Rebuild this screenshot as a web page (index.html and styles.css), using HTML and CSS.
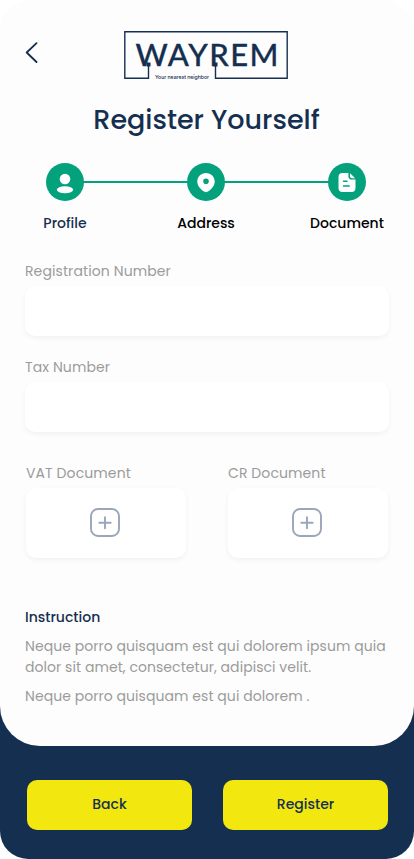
FILE: index.html
```html
<!DOCTYPE html>
<html lang="en">
<head>
<meta charset="utf-8">
<meta name="viewport" content="width=device-width, initial-scale=1">
<title>Register Yourself</title>
<link rel="stylesheet" href="styles.css">
</head>
<body>
<div class="screen">
  <main class="sheet">
    <header class="top">
      <a class="back-link" href="#" aria-label="Go back">
        <svg width="13" height="21" viewBox="0 0 13 21"><path d="M11.500 1.200 1.700 10.500 11.500 20"/></svg>
      </a>
      <svg class="logo" width="164" height="49" viewBox="0 0 164 49">
        <path class="logo-frame" d="M24.5 34V47.300H.8V.8H163.200V47.300H91.500V34"/>
        <rect x="22.500" y="31.500" width="4" height="4"/><rect x="89.500" y="31.500" width="4" height="4"/>
        <text class="logo-name" x="11.500" y="35" textLength="143" lengthAdjust="spacing">WAYREM</text>
        <text class="logo-tag" x="31" y="47.500" textLength="54">Your nearest neighbor</text>
      </svg>
    </header>

    <h1 class="title">Register Yourself</h1>

    <ol class="steps">
      <li class="step current">
        <span class="dot"><svg width="38" height="38" viewBox="0 0 38 38"><circle cx="19" cy="16" r="5.300"/><ellipse cx="19" cy="26.700" rx="8.200" ry="3.500"/></svg></span>
        <span class="step-name">Profile</span>
      </li>
      <li class="step">
        <span class="dot"><svg width="38" height="38" viewBox="0 0 38 38"><path fill-rule="evenodd" d="M19 10c-5 0-8.700 3.700-8.700 8.400 0 4.800 3.500 8 7.300 10.400q1.400.8 2.800 0c3.800-2.400 7.300-5.600 7.300-10.400C27.700 13.700 24 10 19 10Zm0 5.400a2.800 2.800 0 1 1 0 5.600 2.800 2.800 0 0 1 0-5.600Z"/></svg></span>
        <span class="step-name">Address</span>
      </li>
      <li class="step">
        <span class="dot"><svg width="38" height="38" viewBox="0 0 38 38"><path d="M14.500 10H20.400V13.200Q20.400 16.600 24 16.600H27.500V25Q27.500 29 23.500 29H14.500Q10.500 29 10.500 25V14Q10.500 10 14.500 10ZM22 10.200 27.200 15.300H24Q22 15.300 22 13.300Z"/><path class="cut" d="M15.500 18.200h3.500M15.500 23h5.700"/></svg></span>
        <span class="step-name">Document</span>
      </li>
    </ol>

    <form class="form">
      <label class="field"><span class="label">Registration Number</span><input class="box" type="text"></label>
      <label class="field"><span class="label">Tax Number</span><input class="box" type="text"></label>
      <div class="uploads">
        <div class="upload"><span class="label">VAT Document</span>
          <button class="box drop" type="button" aria-label="Add VAT document"><svg width="32" height="32" viewBox="0 0 32 32"><rect x="2" y="2" width="28" height="27" rx="7"/><path d="M16 10.200v11M10.300 15.700h11.400"/></svg></button></div>
        <div class="upload"><span class="label">CR Document</span>
          <button class="box drop" type="button" aria-label="Add CR document"><svg width="32" height="32" viewBox="0 0 32 32"><rect x="2" y="2" width="28" height="27" rx="7"/><path d="M16 10.200v11M10.300 15.700h11.400"/></svg></button></div>
      </div>
    </form>

    <section class="notes">
      <h2>Instruction</h2>
      <p>Neque porro quisquam est qui dolorem ipsum quia<br>dolor sit amet, consectetur, adipisci velit.</p>
      <p>Neque porro quisquam est qui dolorem .</p>
    </section>
  </main>

  <footer class="actions">
    <button type="button">Back</button>
    <button type="button">Register</button>
  </footer>
</div>
</body>
</html>
```
FILE: styles.css
```css
* { box-sizing: border-box; margin: 0; padding: 0; }
body { background: #fff; font-family: Poppins, Inter, "Liberation Sans", sans-serif; font-size: 14px; color: #152f50; }
button { font: inherit; color: inherit; border: 0; }
.screen { height: 859px; width: 414px; background: linear-gradient(#fdfdfd 600px, #152f50 600px); border-radius: 32px 32px 28px 28px; overflow: hidden; display: flex; flex-direction: column; }
.sheet { height: 746px; background: #fdfdfd; border-radius: 0 0 40px 40px; padding: 31px 25px 0; }
.top { display: flex; height: 49px; }
.back-link { width: 99px; padding-top: 11px; }
.back-link svg { display: block; fill: none; stroke: #152f50; stroke-width: 1.8; stroke-linecap: round; stroke-linejoin: round; }
.logo { display: block; fill: #152f50; }
.logo-frame { fill: none; stroke: #152f50; stroke-width: 1.4; }
.logo-name { font: 500 31px Lato, sans-serif; stroke: #152f50; stroke-width: .3; }
.logo-tag { font: 500 5.2px Inter, sans-serif; }
.title { margin-top: 19px; padding: 0 1px 1px 0; text-align: center; font-size: 27px; line-height: 41px; font-weight: 500; white-space: nowrap; }

.steps { display: flex; justify-content: space-between; list-style: none; width: 364px; margin: 22px 0 0 -1px; position: relative; }
.steps::before { content: ""; position: absolute; left: 41px; right: 41px; top: 18px; height: 2px; background: #04a27c; }
.step { width: 82px; display: flex; flex-direction: column; align-items: center; position: relative; color: #000; }
.current { color: #152f50; }
.dot { width: 38px; height: 38px; border-radius: 50%; background: #04a27c; }
.dot svg { display: block; fill: #fff; }
.cut { stroke: #04a27c; stroke-width: 1.5; stroke-linecap: round; }
.step-name { margin-top: 12px; line-height: 21px; font-weight: 500; }

.form { margin-top: 27px; }
.field { display: block; height: 96px; }
.label { display: block; width: max-content; color: #9b9b9b; line-height: 21px; margin-bottom: 4px; letter-spacing: .1px; }
.box { display: block; width: 364px; height: 50px; border: 0; border-radius: 10px; background: #fff; box-shadow: 0 2px 5px rgba(0, 0, 0, .05); }
.uploads { display: grid; grid-template-columns: 160px 160px; gap: 42px; margin: 10px 0 0 1px; }
.drop { width: 160px; height: 70px; padding-right: 2px; display: flex; justify-content: center; align-items: center; }
.drop svg { fill: none; stroke: #9aa6b9; stroke-width: 1.9; stroke-linecap: round; }

.notes { margin-top: 49px; color: #9b9b9b; line-height: 21px; letter-spacing: .055px; white-space: nowrap; }
.notes h2 { font-size: 14px; font-weight: 500; letter-spacing: 0; color: #152f50; }
.notes p { margin-top: 8px; }

.actions { display: flex; justify-content: space-between; padding: 34px 26px 0 27px; }
.actions button { width: 165px; height: 50px; padding-bottom: 2px; border-radius: 10px; background: #f2e80f; font-weight: 500; }
```
